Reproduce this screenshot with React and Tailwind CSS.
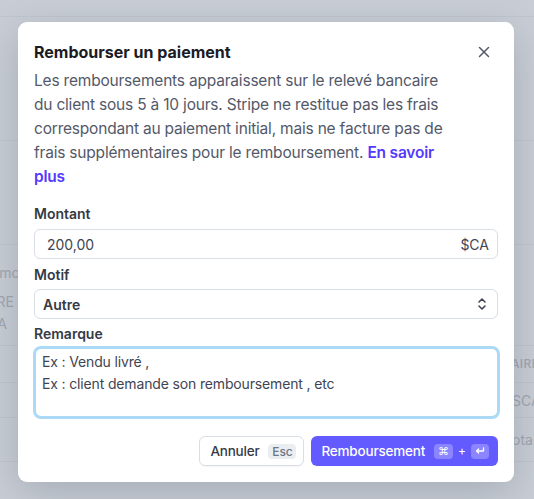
import { useState } from 'react'

const FONT = { fontFamily: 'Inter, "Noto Sans", "Liberation Sans", sans-serif' }

function CloseIcon() {
  return (
    <svg width="12" height="12" viewBox="0 0 12 12" fill="none">
      <path d="M1.5 1.5l9 9M10.5 1.5l-9 9" stroke="#545969" strokeWidth="1.5" strokeLinecap="round" />
    </svg>
  )
}

function UpDownIcon() {
  return (
    <svg width="10" height="14" viewBox="0 0 10 14" fill="none">
      <path d="M2 5l3-3 3 3M2 9l3 3 3-3" stroke="#414552" strokeWidth="1.6" strokeLinecap="round" strokeLinejoin="round" />
    </svg>
  )
}

function Label({ children }) {
  return <div className="text-[14px] leading-5 font-semibold text-[#353a44]">{children}</div>
}

function Backdrop() {
  const txt = 'text-[14px] text-[#a1a7b1] whitespace-nowrap'
  return (
    <div className="flex flex-col">
      <div className="h-[17px] border-b border-[#c0c6cf]" />
      <div className="h-[124px] border-b border-[#c0c6cf]" />
      <div className="h-[104px] border-b border-[#c0c6cf]" />
      <div className="h-[101px] border-b border-[#c0c6cf] flex flex-col pt-[17px]">
        <div className="w-[20px] overflow-hidden flex justify-end">
          <span className={txt}>Code promo</span>
        </div>
        <div className="w-[14px] overflow-hidden flex justify-end mt-[8px]">
          <span className={`${txt} leading-[22px]`}>LIVRE</span>
        </div>
        <div className="w-[7px] overflow-hidden flex justify-end">
          <span className={`${txt} leading-[22px]`}>CA</span>
        </div>
      </div>
      <div className="h-[37px] border-b border-[#c0c6cf] flex justify-end items-center">
        <div className="w-[23px] overflow-hidden flex">
          <span className="text-[12px] font-medium tracking-wide text-[#a1a7b1] whitespace-nowrap">AIRE</span>
        </div>
      </div>
      <div className="h-[35px] border-b border-[#c0c6cf] flex justify-end items-center">
        <div className="w-[22px] overflow-hidden flex">
          <span className={txt}>SCA</span>
        </div>
      </div>
      <div className="h-[44px] border-b border-[#c0c6cf] flex justify-end items-center">
        <div className="w-[22px] overflow-hidden flex">
          <span className={txt}>otal</span>
        </div>
      </div>
    </div>
  )
}

export default function App() {
  const [note, setNote] = useState('Ex : Vendu livré ,\nEx : client demande son remboursement , etc')

  return (
    <div className="relative w-[534px] h-[499px] overflow-hidden bg-[#c9ced6]" style={FONT}>
      <Backdrop />

      <div className="absolute inset-0 pl-[18px] pt-[22px]">
        <div className="w-[496px] bg-white rounded-[9px] shadow-[0_10px_40px_rgba(60,66,87,0.25)] px-4 pt-[16px] pb-[16px]">
          <div className="flex items-start justify-between">
            <div className="w-[416px]">
              <div className="text-[16px] leading-7 font-bold text-[#1a1b25]">Rembourser un paiement</div>
              <p className="mt-[3px] text-[15.5px] tracking-[-0.2px] leading-6 text-[#545969]">
                Les remboursements apparaissent sur le relevé bancaire du client sous 5 à 10 jours. Stripe ne restitue pas les frais correspondant au paiement initial, mais ne facture pas de frais supplémentaires pour le remboursement.{' '}
                <a href="#" className="font-semibold text-[#533afd]">En savoir plus</a>
              </p>
            </div>
            <button className="w-7 h-7 flex items-center justify-center">
              <CloseIcon />
            </button>
          </div>

          <div className="mt-[15px]">
            <Label>Montant</Label>
            <div className="mt-[5px] h-[30px] border border-[#d8dee4] rounded-[6px] flex items-center justify-between pl-3 pr-[8px] text-[14px] text-[#414552]">
              <span>200,00</span>
              <span>$CA</span>
            </div>
          </div>

          <div className="mt-[6px]">
            <Label>Motif</Label>
            <div className="mt-[4px] h-[30px] border border-[#d8dee4] rounded-[6px] flex items-center justify-between pl-2 pr-[10px] text-[14px] font-semibold text-[#353a44]">
              <span>Autre</span>
              <UpDownIcon />
            </div>
          </div>

          <div className="mt-[5px]">
            <Label>Remarque</Label>
            <textarea
              value={note}
              onChange={e => setNote(e.target.value)}
              className="mt-[2px] block w-[467px] -ml-[1px] h-[73px] resize-none border-[3px] border-[#acd9f6] rounded-[8px] px-[6px] pt-[2px] text-[14px] tracking-[-0.15px] leading-[22px] text-[#414552] outline-none"
            />
          </div>

          <div className="mt-[17px] flex justify-end gap-[7px]">
            <button className="h-[30px] pl-[10px] pr-[7px] border border-[#d8dee4] rounded-[6px] flex items-center gap-[9px] shadow-[0_1px_1px_rgba(0,0,0,0.04)]">
              <span className="text-[13.5px] tracking-[-0.2px] font-medium text-[#353a44]">Annuler</span>
              <span className="w-[28px] h-[15px] rounded-[4px] bg-[#ebeef1] text-[12px] leading-[15px] text-center font-medium text-[#6c7688]">Esc</span>
            </button>
            <button className="h-[30px] pl-[10px] pr-[9px] rounded-[6px] bg-[#635bff] flex items-center gap-[9px]">
              <span className="text-[13.5px] tracking-[-0.2px] font-medium text-white">Remboursement</span>
              <span className="flex items-center gap-[5px]">
                <span className="w-[19px] h-[15px] rounded-[4px] bg-[#8b85ff] flex items-center justify-center text-[11px] text-white">⌘</span>
                <span className="text-[12px] text-white">+</span>
                <span className="w-[18px] h-[15px] rounded-[4px] bg-[#8b85ff] flex items-center justify-center">
                  <svg width="10" height="8" viewBox="0 0 10 8" fill="none">
                    <path d="M8.5 0.8v3.2H1.6M3.6 2L1.5 4l2.1 2" stroke="white" strokeWidth="1.3" strokeLinecap="round" strokeLinejoin="round" />
                  </svg>
                </span>
              </span>
            </button>
          </div>
        </div>
      </div>
    </div>
  )
}
